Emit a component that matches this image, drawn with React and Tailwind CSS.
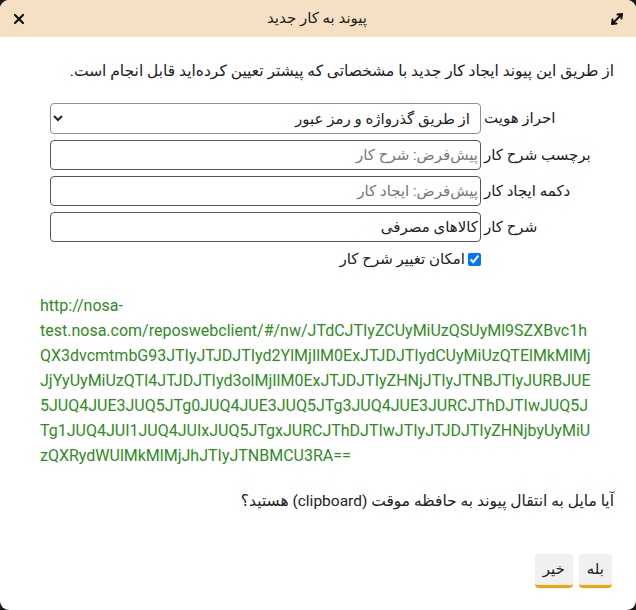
import { useState } from 'react';

const link =
  'http://nosa-test.nosa.com/reposwebclient/#/nw/JTdCJTIyZCUyMiUzQSUyMl9SZXBvc1hQX3dvcmtmbG93JTIyJTJDJTIyd2YlMjIlM0ExJTJDJTIydCUyMiUzQTElMkMlMjJjYyUyMiUzQTI4JTJDJTIyd3olMjIlM0ExJTJDJTIyZHNjJTIyJTNBJTIyJURBJUE5JUQ4JUE3JUQ5JTg0JUQ4JUE3JUQ5JTg3JUQ4JUE3JURCJThDJTIwJUQ5JTg1JUQ4JUI1JUQ4JUIxJUQ5JTgxJURCJThDJTIwJTIyJTJDJTIyZHNjbyUyMiUzQXRydWUlMkMlMjJhJTIyJTNBMCU3RA==';

function Row({ label, children }) {
  return (
    <div className="flex items-start">
      <div className="w-[125px] shrink-0 pt-[5px] pl-[3px] text-left text-[15px] leading-5">{label}</div>
      <div className="w-[431px]">{children}</div>
    </div>
  );
}

export default function App() {
  const [desc, setDesc] = useState('کالاهای مصرفی');
  const [canEdit, setCanEdit] = useState(true);

  return (
    <div className="h-[610px] w-[636px] bg-[#1a1a1a] font-['Roboto','DejaVu_Sans',sans-serif] text-[#222]">
      <div dir="rtl" className="flex h-full flex-col overflow-hidden rounded-[9px] bg-white">
        {/* سربرگ */}
        <div className="flex h-[37px] shrink-0 items-center justify-between bg-[#f6e0c3] px-[10px]">
          <svg width="16" height="16" viewBox="0 0 16 16" className="mr-[1px]">
            <path d="M3 13 L13 3 M13 3 L8.5 3.6 M13 3 L12.4 7.5 M3 13 L3.6 8.5 M3 13 L7.5 12.4" stroke="#111" strokeWidth="2" fill="none" strokeLinecap="round" />
          </svg>
          <div className="text-[15px]">پیوند به کار جدید</div>
          <svg width="12" height="12" viewBox="0 0 12 12" className="ml-[3px]">
            <path d="M2 2 L10 10 M10 2 L2 10" stroke="#111" strokeWidth="2.2" strokeLinecap="round" />
          </svg>
        </div>

        <div className="flex flex-1 flex-col px-[22px] pt-[22px]">
          <p className="text-[15.5px] leading-6">
            از طریق این پیوند ایجاد کار جدید با مشخصاتی که پیشتر تعیین کرده‌اید قابل انجام است.
          </p>

          <div className="mt-[20px] flex flex-col gap-[6px] pr-[8px]">
            <Row label="احراز هویت">
              <select className="h-[31px] w-full rounded-[4px] border border-[#8f8f8f] bg-white px-[6px] text-[15px]">
                <option>از طریق گذرواژه و رمز عبور</option>
              </select>
            </Row>
            <Row label="برچسب شرح کار">
              <input className="h-[30px] w-full rounded-[4px] border border-[#555] px-[2px] text-[15px] placeholder:text-[#777]" placeholder="پیش‌فرض: شرح کار" />
            </Row>
            <Row label="دکمه ایجاد کار">
              <input className="h-[30px] w-full rounded-[4px] border border-[#555] px-[2px] text-[15px] placeholder:text-[#777]" placeholder="پیش‌فرض: ایجاد کار" />
            </Row>
            <Row label="شرح کار">
              <input
                className="h-[30px] w-full rounded-[4px] border border-[#555] px-[2px] text-[15px]"
                value={desc}
                onChange={(e) => setDesc(e.target.value)}
              />
            </Row>
            <div className="flex">
              <div className="w-[125px] shrink-0" />
              <label className="flex items-center gap-[3px] text-[15px]">
                <input type="checkbox" className="h-[13px] w-[13px] accent-[#0075ff]" checked={canEdit} onChange={() => setCanEdit(!canEdit)} />
                امکان تغییر شرح کار
              </label>
            </div>
          </div>

          <p dir="ltr" className="mt-[22px] ml-[18px] w-[554px] self-end break-words text-left text-[16px] leading-[25px] text-[#2e8b1e]">
            {link}
          </p>

          <p className="mt-[21px] text-[15.5px] leading-6">
            آیا مایل به انتقال پیوند به حافظه موقت (clipboard) هستید؟
          </p>

          <div className="mt-auto mb-[22px] flex gap-[6px] pr-[2px]">
            <button className="h-[34px] rounded-[4px] border-b-[3px] border-[#f5a500] bg-[#f0f0f0] px-[8px] text-[15px]">بله</button>
            <button className="h-[34px] rounded-[4px] border-b-[3px] border-[#f5a500] bg-[#f0f0f0] px-[8px] text-[15px]">خیر</button>
          </div>
        </div>
      </div>
    </div>
  );
}
